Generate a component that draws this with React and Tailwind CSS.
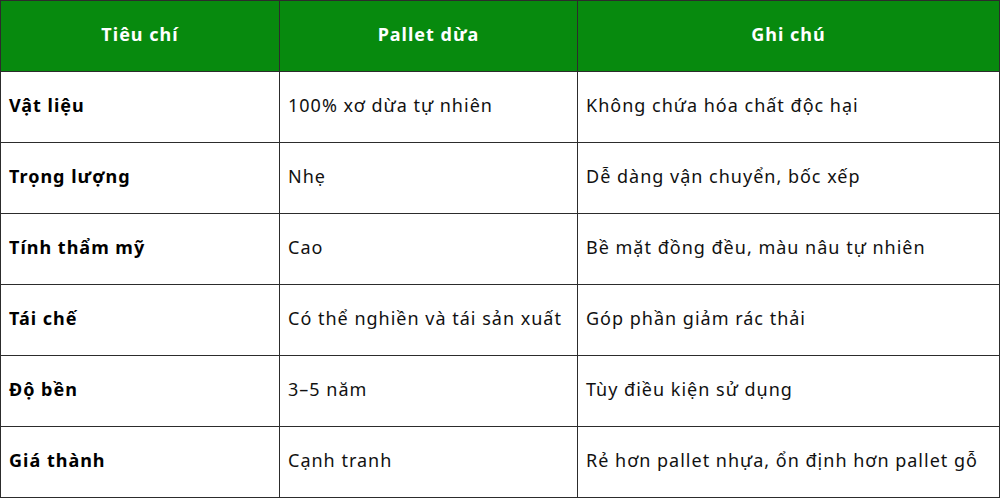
const rows = [
  ['Vật liệu', '100% xơ dừa tự nhiên', 'Không chứa hóa chất độc hại'],
  ['Trọng lượng', 'Nhẹ', 'Dễ dàng vận chuyển, bốc xếp'],
  ['Tính thẩm mỹ', 'Cao', 'Bề mặt đồng đều, màu nâu tự nhiên'],
  ['Tái chế', 'Có thể nghiền và tái sản xuất', 'Góp phần giảm rác thải'],
  ['Độ bền', '3–5 năm', 'Tùy điều kiện sử dụng'],
  ['Giá thành', 'Cạnh tranh', 'Rẻ hơn pallet nhựa, ổn định hơn pallet gỗ'],
];

export default function App() {
  return (
    <div className="w-[1000px] h-[500px] bg-white font-['Noto_Sans',sans-serif] text-[18px] tracking-[1px] text-[#111]">
      <table className="w-[1000px] table-fixed border-collapse">
        <colgroup>
          <col className="w-[279px]" />
          <col className="w-[298px]" />
          <col />
        </colgroup>
        <thead>
          <tr className="h-[71px] bg-[#078a0e] text-white">
            <th className="border border-[#2c2c2c] pb-[3px] font-bold text-center">Tiêu chí</th>
            <th className="border border-[#2c2c2c] pb-[3px] font-bold text-center">Pallet dừa</th>
            <th className="border border-[#2c2c2c] pb-[3px] font-bold text-center">Ghi chú</th>
          </tr>
        </thead>
        <tbody>
          {rows.map((r) => (
            <tr key={r[0]} className="h-[71px]">
              <td className="border border-[#2c2c2c] pl-2 pb-[3px] font-bold text-black">{r[0]}</td>
              <td className="border border-[#2c2c2c] pl-2 pb-[3px]">{r[1]}</td>
              <td className="border border-[#2c2c2c] pl-2 pb-[3px]">{r[2]}</td>
            </tr>
          ))}
        </tbody>
      </table>
    </div>
  );
}
